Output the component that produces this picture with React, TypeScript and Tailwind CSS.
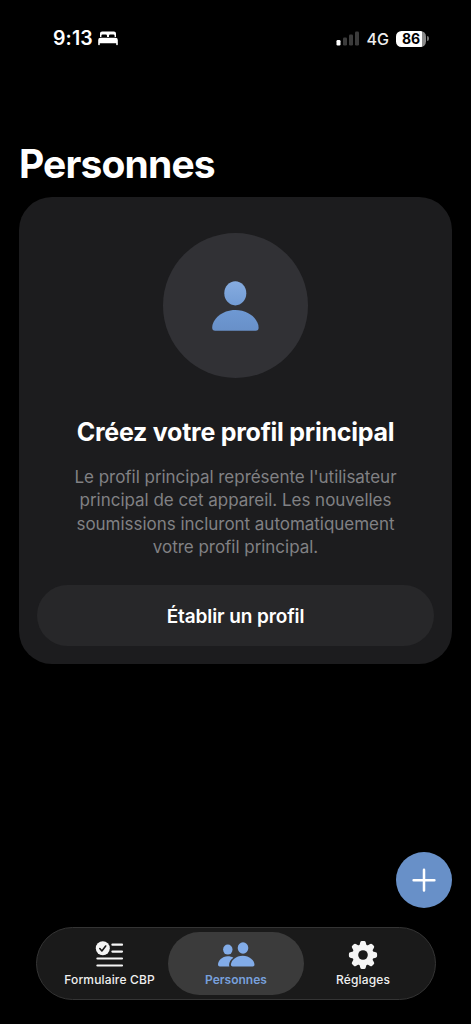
const Bed = () => (
  <svg className="h-[15px] w-[20px]" viewBox="0 0 20 15" fill="#fff">
    <path d="M2 6V2.6Q2 .5 4.1.5h11.8Q18 .5 18 2.6V6h-1.4V4.7q0-1.2-1.2-1.2h-3.2q-1.2 0-1.2 1.2V6H9V4.7q0-1.2-1.2-1.2H4.6q-1.2 0-1.2 1.2V6z" />
    <path d="M2.5 6.8h15q2.3 0 2.3 2.3v4.4q0 .8-.8.8t-.8-.8v-1.2H1.8v1.2q0 .8-.8.8t-.8-.8V9.1q0-2.3 2.3-2.3z" />
  </svg>
);

const Signal = () => (
  <svg className="h-[16px] w-[24px]" viewBox="0 0 24 16">
    <rect x="0.5" y="9" width="4" height="5.5" rx="1.2" fill="#fff" />
    <rect x="7" y="6.5" width="4" height="8" rx="1.2" fill="#3b3b3b" />
    <rect x="13" y="3.5" width="4" height="11" rx="1.2" fill="#3b3b3b" />
    <rect x="19" y="0.5" width="4" height="14" rx="1.2" fill="#3b3b3b" />
  </svg>
);

const Person = () => (
  <svg className="h-[50px] w-[48px]" viewBox="0 0 48 50">
    <defs>
      <linearGradient id="person" x1="0" y1="0" x2="0" y2="50" gradientUnits="userSpaceOnUse">
        <stop offset="0" stopColor="#86ace0" />
        <stop offset="0.6" stopColor="#6e98d2" />
        <stop offset="1" stopColor="#6890c8" />
      </linearGradient>
    </defs>
    <g fill="url(#person)">
      <ellipse cx="23.3" cy="12.3" rx="11" ry="12.1" />
      <path d="M3.2 49.8Q.2 49.8 .2 46.5C.2 38.5 9.7 29 23.4 29S46.6 38.5 46.6 46.5Q46.6 49.8 43.6 49.8z" />
    </g>
  </svg>
);

const FormIcon = () => (
  <svg className="h-[28px] w-[30px]" viewBox="0 0 30 28" fill="none" strokeLinecap="round">
    <circle cx="7.8" cy="7.2" r="7" fill="#f5f5f5" />
    <path d="M4.8 7.5l2.1 2.5 3.8-5" stroke="#1a1a1a" strokeWidth="1.6" strokeLinejoin="round" />
    <path d="M17.4 3.7h9.6M17.4 10.6h9.6M2.4 17.5h24.6M2.4 24.5h24.6" stroke="#f5f5f5" strokeWidth="2.2" />
  </svg>
);

const PeopleIcon = () => (
  <svg className="h-[26px] w-[38px]" viewBox="0 0 38 26" fill="#82ace8">
    <ellipse cx="10.8" cy="7.6" rx="4.7" ry="5" />
    <path d="M2.8 24.5Q1 24.5 1 22.8C1 18.7 5 14.2 10.8 14.2c2.3 0 4.1.5 5.6 1.5-2.8 2-4.3 4.6-4.3 7.1 0 .7.1 1.2.3 1.7z" />
    <ellipse cx="26" cy="6" rx="5.3" ry="5.8" />
    <path d="M15.7 24.5q-1.8 0-1.8-1.7C13.9 18.5 19 13.8 25.7 13.8s11.8 4.7 11.8 9q0 1.7-1.8 1.7z" />
  </svg>
);

const GearIcon = () => (
  <svg className="h-[30px] w-[30px]" viewBox="0 0 30 30">
    <g fill="#f5f5f5">
      {[0, 45, 90, 135, 180, 225, 270, 315].map((angle) => (
        <path
          key={angle}
          transform={`rotate(${angle} 15 15)`}
          d="M11 7L12.3 2.2Q12.6 .9 13.9 .9h2.2q1.3 0 1.6 1.3L19 7z"
        />
      ))}
      <circle cx="15" cy="15" r="10.6" />
    </g>
    <circle cx="15" cy="15" r="4.8" fill="#1a1a1a" />
  </svg>
);

export default function App() {
  return (
    <div className="flex h-[1024px] w-[471px] flex-col overflow-hidden bg-black font-['Inter',sans-serif] text-white">
      <header className="flex h-[77px] shrink-0 items-center justify-between pr-[42px] pl-[53px]">
        <div className="flex items-center gap-[5px]">
          <span className="mt-px text-[19.5px] font-semibold tracking-[0.1px]">9:13</span>
          <Bed />
        </div>
        <div className="flex items-center">
          <Signal />
          <span className="ml-[7px] text-[16px] font-medium tracking-[0px] text-[#eee]">4G</span>
          <div className="ml-[7px] flex h-[16px] w-[30px] items-center justify-center rounded-[5.5px] bg-[linear-gradient(90deg,#fff_86%,#8b8b8b_86%)] text-[14px] leading-none font-bold text-black">
            86
          </div>
          <div className="ml-px h-[5px] w-[2px] rounded-r-full bg-[#777]" />
        </div>
      </header>

      <h1 className="mt-[63px] ml-[19px] h-[48px] shrink-0 text-[39px] leading-[48px] font-bold tracking-[-0.85px]">
        Personnes
      </h1>

      <main className="mx-[19px] mt-[9px] flex h-[467px] shrink-0 flex-col items-center rounded-[33px] bg-[#1c1c1e] px-[18px] pt-[36px]">
        <div className="flex h-[145px] w-[145px] shrink-0 items-center justify-center rounded-full bg-[#313135]">
          <Person />
        </div>
        <h2 className="mt-[38px] text-[25px] leading-[32px] font-bold tracking-[-0.25px] whitespace-nowrap">
          Créez votre profil principal
        </h2>
        <p className="mt-[18px] text-center text-[17px] leading-[23.4px] tracking-[-0.03px] whitespace-nowrap text-[#818184]">
          Le profil principal représente l'utilisateur
          <br />
          principal de cet appareil. Les nouvelles
          <br />
          soumissions incluront automatiquement
          <br />
          votre profil principal.
        </p>
        <button className="mt-[25px] h-[61px] w-full shrink-0 rounded-full bg-[#272729] pt-[4px] text-[19px] font-semibold tracking-[-0.1px]">
          Établir un profil
        </button>
      </main>

      <button className="mt-auto mr-[19px] flex h-[56px] w-[56px] shrink-0 items-center justify-center self-end rounded-full bg-[#6890c8]">
        <svg className="h-[24px] w-[24px]" viewBox="0 0 24 24" stroke="#fff" strokeWidth="2.5" strokeLinecap="round">
          <path d="M12 1.8v20.8M1.6 12.2h20.8" />
        </svg>
      </button>

      <nav className="mr-[35px] ml-[36px] mt-[19px] mb-[24px] flex h-[73px] shrink-0 items-center rounded-full border border-[#343434] bg-[#1a1a1a] px-[4px] text-[12px] leading-[16px] font-medium tracking-[0.15px] text-[#f0f0f0]">
        <div className="flex h-[63px] w-[136px] shrink-0 flex-col items-center pl-[1px]">
          <div className="mt-[7px] flex h-[32px] items-center"><FormIcon /></div>
          <span className="mt-px whitespace-nowrap">Formulaire CBP</span>
        </div>
        <div className="-ml-[9px] flex h-[63px] w-[136px] shrink-0 flex-col items-center rounded-full bg-[#3b3b3b] text-[#78a0dc]">
          <div className="mt-[7px] flex h-[32px] items-center"><PeopleIcon /></div>
          <span className="mt-px font-semibold tracking-[0px]">Personnes</span>
        </div>
        <div className="-ml-[9px] flex h-[63px] w-[136px] shrink-0 flex-col items-center">
          <div className="mt-[7px] flex h-[32px] items-center"><GearIcon /></div>
          <span className="mt-px">Réglages</span>
        </div>
      </nav>
    </div>
  );
}
